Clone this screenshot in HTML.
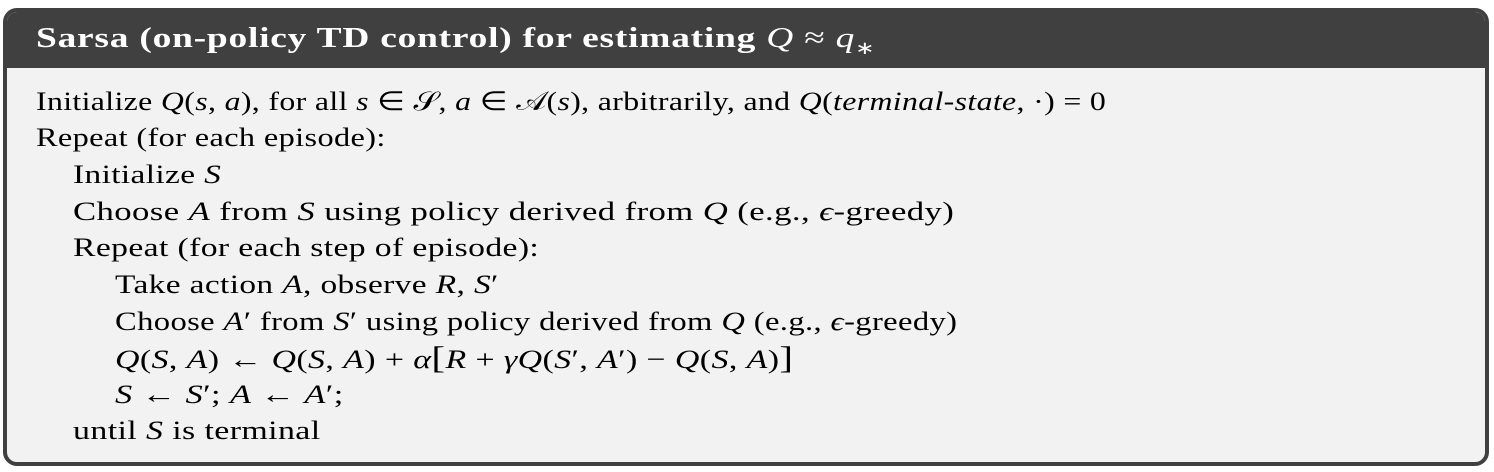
<!DOCTYPE html>
<html><head><meta charset="utf-8"><style>
body{margin:0;background:#fff;width:1494px;height:472px;overflow:hidden;font-family:"Liberation Serif",serif;}
.box{position:absolute;left:3px;top:8px;width:1478px;height:450px;border:4px solid #404040;border-radius:14px;background:#f2f2f2;overflow:hidden}
.hd{position:absolute;left:0;top:0;right:0;height:56px;background:#404040;}
.t{position:absolute;left:36px;top:10px;color:#fff;font-weight:bold;font-size:29px;line-height:56px;letter-spacing:0.6px;white-space:nowrap;transform-origin:0 50%;transform:scaleX(1.29)}
.l{position:absolute;font-size:26.5px;color:#000;white-space:nowrap;line-height:36px;letter-spacing:0.3px;transform-origin:0 50%}
i{font-style:italic}
</style></head><body>
<div class="box">
<div class="hd"></div>
</div>
<div class="t">Sarsa (on-policy TD control) for estimating <i style="font-weight:normal">Q</i> <span style="font-weight:normal">≈</span> <i style="font-weight:normal">q</i><sub style="font-weight:normal;font-size:18px">∗</sub></div>
<div class="l" style="left:36px;top:83px;transform:scaleX(1.2)">Initialize <i>Q</i>(<i>s</i>, <i>a</i>), for all <i>s</i> ∈ 𝒮, <i>a</i> ∈ 𝒜(<i>s</i>), arbitrarily, and <i>Q</i>(<i>terminal-state</i>, ·) = 0</div>
<div class="l" style="left:36px;top:119px;transform:scaleX(1.22)">Repeat (for each episode):</div>
<div class="l" style="left:73px;top:156px;transform:scaleX(1.26)">Initialize <i>S</i></div>
<div class="l" style="left:73px;top:193px;transform:scaleX(1.31)">Choose <i>A</i> from <i>S</i> using policy derived from <i>Q</i> (e.g., <i>ϵ</i>-greedy)</div>
<div class="l" style="left:73px;top:229px;transform:scaleX(1.27)">Repeat (for each step of episode):</div>
<div class="l" style="left:115px;top:266px;transform:scaleX(1.26)">Take action <i>A</i>, observe <i>R</i>, <i>S</i>′</div>
<div class="l" style="left:115px;top:303px;transform:scaleX(1.23)">Choose <i>A</i>′ from <i>S</i>′ using policy derived from <i>Q</i> (e.g., <i>ϵ</i>-greedy)</div>
<div class="l" style="left:115px;top:339px;transform:scaleX(1.28)"><i>Q</i>(<i>S</i>, <i>A</i>) ← <i>Q</i>(<i>S</i>, <i>A</i>) + <i>α</i><span style="font-size:32px">[</span><i>R</i> + <i>γQ</i>(<i>S</i>′, <i>A</i>′) − <i>Q</i>(<i>S</i>, <i>A</i>)<span style="font-size:32px">]</span></div>
<div class="l" style="left:115px;top:376px;transform:scaleX(1.3)"><i>S</i> ← <i>S</i>′; <i>A</i> ← <i>A</i>′;</div>
<div class="l" style="left:73px;top:412px;transform:scaleX(1.28)">until <i>S</i> is terminal</div>
</body></html>
